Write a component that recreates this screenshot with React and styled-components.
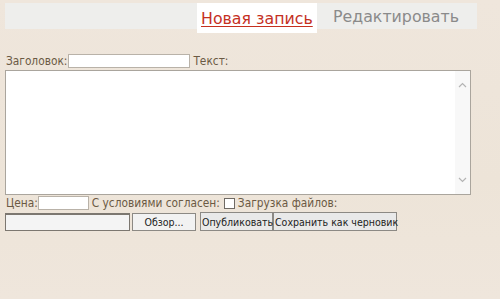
import React from "react";
import styled, { createGlobalStyle } from "styled-components";

const GlobalStyle = createGlobalStyle`
  html, body {
    margin: 0;
    padding: 0;
    background: #efe6db;
    font-family: "DejaVu Sans Condensed", "DejaVu Sans", sans-serif;
  }
`;

const Page = styled.div`
  width: 500px;
  height: 299px;
  padding: 3px 5px 0;
  box-sizing: border-box;
  background: linear-gradient(180deg, #efe6dc 0%, #ede4d8 60%, #efe6dc 100%);
`;

const TabBar = styled.ul`
  list-style: none;
  margin: 0;
  padding: 0 0 0 192px;
  width: 472px;
  height: 26px;
  box-sizing: border-box;
  background: #eeeeec;
  display: flex;
  align-items: flex-start;
`;

const Tab = styled.li`
  height: ${(p) => (p.active ? "30px" : "26px")};
  width: ${(p) => (p.active ? "120px" : "auto")};
  padding: 0 0 0 ${(p) => (p.active ? "4px" : "16px")};
  box-sizing: border-box;
  white-space: nowrap;
  background: ${(p) => (p.active ? "#ffffff" : "transparent")};
  display: flex;
  align-items: center;
  font-family: "DejaVu Sans", sans-serif;
  font-size: 15.8px;
  color: ${(p) => (p.active ? "#c5301f" : "#8a8a8a")};
  text-decoration: ${(p) => (p.active ? "underline" : "none")};
  text-underline-offset: 2px;
`;

const Form = styled.form`
  margin-top: 25px;
  color: #6b5a44;
  font-size: 11.8px;
`;

const Row = styled.div`
  display: flex;
  align-items: center;
  white-space: nowrap;
  margin-top: ${(p) => p.mt || 0}px;
`;

const Label = styled.span`
  margin: ${(p) => p.m || "0"};
`;

const TextInput = styled.input`
  width: ${(p) => p.w}px;
  height: 14px;
  box-sizing: border-box;
  border: 1px solid #b9b2a8;
  background: #fff;
  margin: 0;
  padding: 0;
`;

const AreaBox = styled.div`
  margin-top: 2px;
  width: 466px;
  height: 125px;
  box-sizing: border-box;
  border: 1px solid #aaa59d;
  background: #fff;
  display: flex;
`;

const Area = styled.textarea`
  flex: 1;
  border: none;
  resize: none;
  outline: none;
`;

const ScrollTrack = styled.div`
  width: 15px;
  background: #f8f8f8;
  display: flex;
  flex-direction: column;
  justify-content: space-between;
  align-items: center;
  padding: 11px 0 11px;
`;

const Checkbox = styled.span`
  width: 9px;
  height: 9px;
  border: 1px solid #6f6a64;
  background: #fff;
  display: inline-block;
  margin: 0 3px 0 4px;
`;

const FileBox = styled.div`
  display: flex;
  width: 192px;
  height: 18px;
  margin-right: 3px;
`;

const FileField = styled.div`
  width: 125px;
  box-sizing: border-box;
  border: 1px solid #7c7770;
  border-top-width: 2px;
  background: #f4f4f4;
`;

const Button = styled.button`
  height: ${(p) => p.h || 19}px;
  width: ${(p) => (p.w ? `${p.w}px` : "auto")};
  box-sizing: border-box;
  margin: 0 0 0 ${(p) => p.ml || 0}px;
  padding: 0 1px;
  border: 1px solid #8c8984;
  border-radius: 0;
  background: ${(p) => p.bg || "#e9e9e9"};
  font-family: "DejaVu Sans Condensed", "DejaVu Sans", sans-serif;
  font-size: 10.5px;
  color: #222;
  white-space: nowrap;
`;

const Chevron = ({ up }) => (
  <svg width="9" height="6" viewBox="0 0 9 6">
    <path
      d={up ? "M1 5 L4.5 1.5 L8 5" : "M1 1 L4.5 4.5 L8 1"}
      fill="none"
      stroke="#b4b4b4"
      strokeWidth="1.2"
    />
  </svg>
);

export default function App() {
  return (
    <>
      <GlobalStyle />
      <Page>
        <TabBar>
          <Tab active>Новая запись</Tab>
          <Tab>Редактировать</Tab>
        </TabBar>
        <Form>
          <Row>
            <Label m="0 1px 0 1px">Заголовок:</Label>
            <TextInput w={122} />
            <Label m="0 0 0 3px">Текст:</Label>
          </Row>
          <AreaBox>
            <Area />
            <ScrollTrack>
              <Chevron up />
              <Chevron />
            </ScrollTrack>
          </AreaBox>
          <Row mt={1}>
            <Label m="0 0 0 1px">Цена:</Label>
            <TextInput w={51} />
            <Label m="0 0 0 3px">С условиями согласен:</Label>
            <Checkbox />
            <Label>Загрузка файлов:</Label>
          </Row>
          <Row mt={2}>
            <FileBox>
              <FileField />
              <Button h={18} w={64} ml={2} bg="#f2f2f2">
                Обзор...
              </Button>
            </FileBox>
            <Button w={73}>Опубликовать</Button>
            <Button w={124}>Сохранить как черновик</Button>
          </Row>
        </Form>
      </Page>
    </>
  );
}
